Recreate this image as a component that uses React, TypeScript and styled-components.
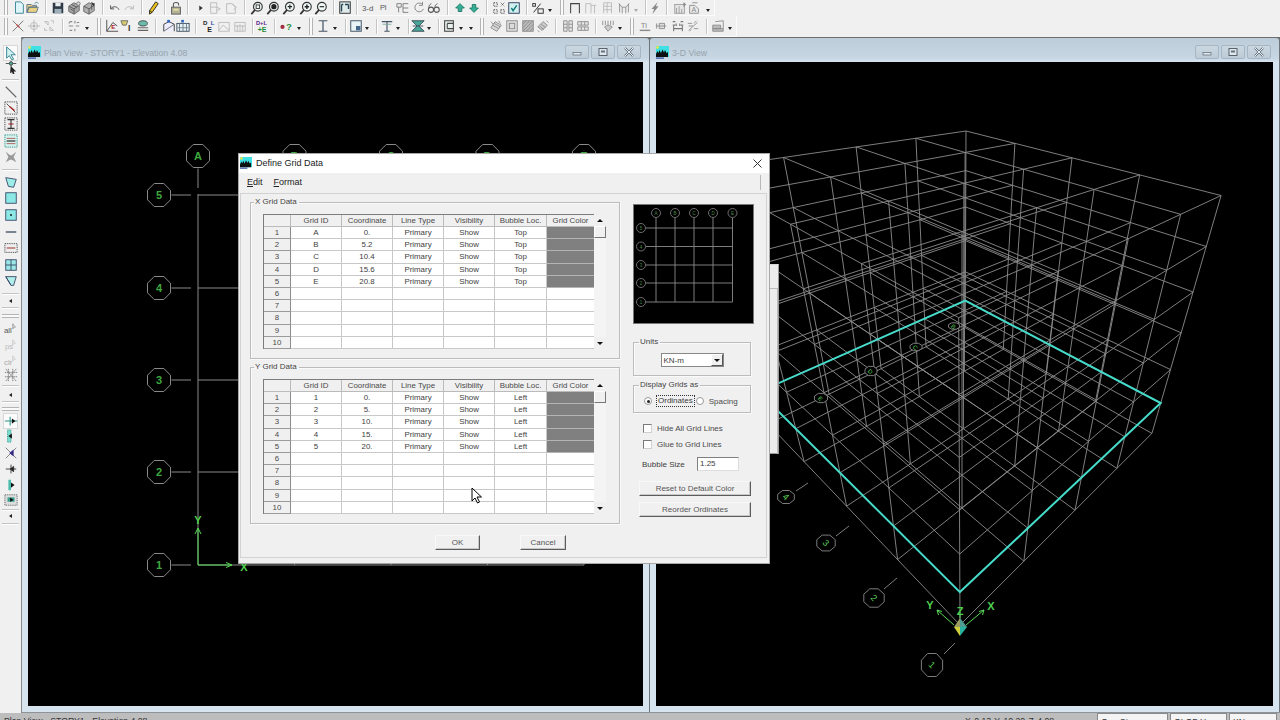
import React from "react";
import styled, { createGlobalStyle } from "styled-components";

const Global = createGlobalStyle`
  html, body { margin: 0; padding: 0; width: 1280px; height: 720px; overflow: hidden; background: #f0f0f0; }
  body { font-family: "Liberation Sans", Arial, sans-serif; color: #3a3a3a; }
  * { box-sizing: border-box; }
`;

const Screen = styled.div`
  position: relative; width: 1280px; height: 720px; display: flex; flex-direction: column;
  overflow: hidden; background: #f0f0f0;
`;
const TopBars = styled.div`
  height: 37px; flex: none; display: flex; flex-direction: column; background: #f0f0f0;
`;
const Row = styled.div<{ $h: number; $w: number }>`
  display: flex; align-items: center; height: ${p => p.$h}px; width: ${p => p.$w}px; flex: none;
  overflow: hidden; border-right: 1px solid #fbfbfb; border-bottom: 1px solid #fbfbfb;
`;
const Cell = styled.div<{ $w: number }>`
  width: ${p => p.$w}px; flex: none; height: 100%; display: flex; align-items: center; justify-content: center;
`;
const VSep = styled.div`width: 1px; height: 15px; background: #c4c4c4; box-shadow: 1px 0 0 #fff;`;
const VGrip = styled.div`width: 4px; height: 17px; border-left: 1px solid #b4b4b4; border-right: 1px solid #b4b4b4; background: #fafafa;`;
const Drop = styled.div<{ $faint?: boolean }>`
  width: 0; height: 0; border-left: 2.5px solid transparent; border-right: 2.5px solid transparent;
  border-top: 3px solid ${p => (p.$faint ? "#aaa" : "#222")}; margin-top: 5px;
`;
const Ico = styled.svg<{ $s?: number }>`width: ${p => p.$s || 14}px; height: ${p => p.$s || 14}px; display: block; flex: none;`;

const Middle = styled.div`flex: 1; display: flex; min-height: 0;`;
const LeftBar = styled.div`
  width: 22px; flex: none; display: flex; flex-direction: column; background: #f0f0f0; border-right: 1px solid #8a8a8a;
`;
const LeftCell = styled.div<{ $h: number }>`
  height: ${p => p.$h}px; flex: none; display: flex; align-items: center; justify-content: center;
`;
const Pressed = styled.div`
  width: 15px; height: 16px; display: flex; align-items: center; justify-content: center;
  background: #fbfbfb; border: 1px solid #d8d8d8;
`;
const HSep = styled.div`height: 1px; width: 17px; background: #c4c4c4; box-shadow: 0 1px 0 #fff;`;
const HGrip = styled.div`height: 4px; width: 17px; border-top: 1px solid #b4b4b4; border-bottom: 1px solid #b4b4b4; background: #fafafa;`;
const SmallArrow = styled.div`
  width: 0; height: 0; border-top: 2.5px solid transparent; border-bottom: 2.5px solid transparent;
  border-right: 3px solid #222;
`;

const Mdi = styled.div`flex: 1; display: flex; min-width: 0; background: #6d7479; border-top: 1px solid #6e6e6e; padding-right: 1px; gap: 1px; border-bottom: 1px solid #8c9499;`;
const MdiWindow = styled.section<{ $w: number }>`
  width: ${p => p.$w}px; flex: none; display: flex; flex-direction: column; padding: 0 6px 6px 6px;
  border-radius: 3px 3px 0 0; background: linear-gradient(#bccdd9 0, #c6d6e2 20px, #d6e4ef 24px, #d6e4ef 100%);
`;
const WinTitle = styled.header`
  height: 24px; flex: none; display: flex; align-items: center; gap: 3px; padding-top: 5px;
`;
const WinName = styled.span`font-size: 8.7px; color: #97a3ad; flex: 1; white-space: nowrap; letter-spacing: 0;`;
const WinBtns = styled.div`display: flex; gap: 1.5px; margin-right: 2px; margin-top: -1px;`;
const WinBtn = styled.button`
  width: 24.5px; height: 14px; padding: 0; display: flex; align-items: center; justify-content: center;
  background: linear-gradient(#cbd8e2, #bccbd7); border: 1px solid #a6b6c2; border-radius: 2px;
`;
const Canvas = styled.div`flex: 1; min-height: 0; background: #000; overflow: hidden;`;
const CanvasSvg = styled.svg`display: block; width: 100%; height: 100%;`;

const StatusBar = styled.footer`
  height: 7px; flex: none; position: relative; display: flex; align-items: flex-start; background: #bdbdbd;
  overflow: hidden; font-size: 8.7px; color: #333; padding: 3px 3px 0 4px; white-space: nowrap;
`;
const StatusMain = styled.span`width: 961px; flex: none;`;
const StatusCoord = styled.span`width: 132px; flex: none; word-spacing: 1px;`;
const StatusBox = styled.span<{ $w: number }>`
  width: ${p => p.$w}px; flex: none; margin-top: -3px; margin-right: 2px; padding: 3px 0 0 3px; height: 12px;
  background: #f4f4f4; border: 1px solid #8a8a8a;
`;

const Dialog = styled.div`
  position: absolute; left: 238px; top: 153px; width: 532px; height: 411px; background: #f0f0f0;
  border: 1px solid #a8a8a8; display: flex; flex-direction: column; font-size: 8px; color: #3c3c3c;
`;
const DlgTitle = styled.header`
  height: 18px; flex: none; background: #fff; display: flex; align-items: center; padding: 0 7px 0 1px; gap: 4px;
  font-size: 9px; color: #222;
`;
const DlgName = styled.span`flex: 1;`;
const MenuBar = styled.nav`
  height: 21px; flex: none; display: flex; align-items: center; gap: 11px; padding: 0 8px 1px 8px; font-size: 9px; color: #222;
  background: linear-gradient(#fff 0, #fff 1px, #f0f0f0 1px);
`;
const MenuEnd = styled.div`margin-left: auto; width: 1px; height: 15px; background: #b8b8b8;`;
const Panel = styled.div`
  flex: 1; min-height: 0; margin: 0 2px 5px 1px; border: 1px solid #d2d2d2; padding: 3px 0 0 9px; display: flex; flex-direction: column;
`;
const PanelTop = styled.div`display: flex; gap: 13px;`;
const LeftCol = styled.div`width: 370px; flex: none; display: flex; flex-direction: column; gap: 3px;`;
const RightCol = styled.div`width: 121px; flex: none; display: flex; flex-direction: column; padding-top: 7px;`;
const Group = styled.fieldset<{ $w?: number; $h?: number; $pad?: string; $top?: number }>`
  margin: ${p => p.$top || 0}px 0 0 0; min-width: 0; border: 1px solid #bcbcbc; box-shadow: inset 1px 1px 0 #fafafa, 1px 1px 0 #fafafa;
  width: ${p => (p.$w ? p.$w + "px" : "100%")}; height: ${p => p.$h}px; padding: ${p => p.$pad || "7px 0 0 12px"};
`;
const Legend = styled.legend<{ $ml: number }>`
  padding: 0 2px 0 1px; margin-left: ${p => p.$ml}px; font-size: 8px; line-height: 10px; height: 10px; color: #444;
`;
const TableBox = styled.div`display: flex; width: 343px; height: 135px;`;
const GridT = styled.div`
  width: 331px; display: grid; grid-template-columns: 27px 51px 51px 51px 51px 52px 48px;
  grid-template-rows: 12px repeat(10, 12.2px); border-top: 1px solid #7c7c7c; border-left: 1px solid #7c7c7c;
`;
const Th = styled.div`
  background: #f0f0f0; border-right: 1px solid #bbb; border-bottom: 1px solid #bbb; display: flex; align-items: center; justify-content: center;
  font-size: 7.9px; color: #4a4a4a; white-space: nowrap; overflow: hidden;
`;
const RowH = styled(Th)`border-right: 1px solid #8c8c8c; border-bottom: 1px solid #9a9a9a;`;
const Td = styled.div`
  background: #fff; border-right: 1px solid #c8c8c8; border-bottom: 1px solid #c8c8c8; display: flex; align-items: center; justify-content: center;
  font-size: 7.9px; color: #3e3e3e; white-space: nowrap; overflow: hidden;
`;
const Swatch = styled(Td)`background: #808080; border-color: #b4b4b4;`;
const Scroll = styled.div`width: 12px; height: 135px; flex: none; display: flex; flex-direction: column; background: #f4f4f4;`;
const ScrollBtn = styled.div`
  height: 12px; flex: none; display: flex; align-items: center; justify-content: center; background: #f0f0f0;
`;
const ScrollThumb = styled.div`height: 12px; flex: none; background: #f0f0f0; border: 1px solid; border-color: #fff #777 #777 #fff;`;
const ScrollTrack = styled.div`flex: 1;`;
const Tri = styled.div<{ $up?: boolean }>`
  width: 0; height: 0; border-left: 3px solid transparent; border-right: 3px solid transparent;
  ${p => (p.$up ? "border-bottom: 3px solid #111;" : "border-top: 3px solid #111;")}
`;
const Preview = styled.div`width: 121px; height: 120px; flex: none; background: #000; border: 1px solid #777; margin-bottom: 13px;`;
const PreviewSvg = styled.svg`display: block; width: 100%; height: 100%;`;
const ComboWrap = styled.div`display: flex; justify-content: center;`;
const Combo = styled.div`
  width: 63px; height: 14px; background: #fff; border: 1px solid #888; display: flex; align-items: center; justify-content: space-between;
  padding-left: 2px; font-size: 8px;
`;
const ComboBtn = styled.div`
  width: 12px; height: 12px; background: #f0f0f0; border: 1px solid; border-color: #fff #555 #555 #fff; display: flex; align-items: center; justify-content: center;
`;
const RadioRow = styled.div`display: flex; align-items: center; padding-left: 10px; height: 12px; margin-top: 1px;`;
const Radio = styled.span<{ $on?: boolean }>`
  width: 8px; height: 8px; border-radius: 50%; background: #fff; border: 1px solid #9a9a9a; flex: none; display: flex; align-items: center; justify-content: center;
  &::after { content: ""; width: 3px; height: 3px; border-radius: 50%; background: ${p => (p.$on ? "#222" : "transparent")}; }
`;
const Focus = styled.span`border: 1px dotted #333; padding: 0 1px; margin: 0 1px 0 4px; line-height: 10px;`;
const RadioText = styled.span`margin-left: 5px; color: #4a4a4a;`;
const CheckRow = styled.label<{ $top: number }>`
  display: flex; align-items: center; gap: 5px; padding-left: 10px; height: 12px; margin-top: ${p => p.$top}px; color: #4a4a4a;
`;
const Check = styled.span`width: 9px; height: 9px; background: #fff; border: 1px solid; border-color: #7a7a7a #d0d0d0 #d0d0d0 #7a7a7a; flex: none;`;
const SizeRow = styled.div`display: flex; align-items: center; padding-left: 9px; height: 14px; margin-top: 7px; color: #3c3c3c;`;
const SizeLabel = styled.span`width: 55px; flex: none;`;
const SizeInput = styled.div`width: 42px; height: 14px; background: #fff; border: 1px solid; border-color: #808080 #ddd #ddd #808080; padding: 1px 0 0 2px; line-height: 10px;`;
const DlgBtn = styled.button<{ $w: number; $top?: number; $left?: number }>`
  width: ${p => p.$w}px; height: 15px; padding: 0; margin-top: ${p => p.$top || 0}px; margin-left: ${p => p.$left || 0}px;
  background: #f0f0f0; border: 1px solid; border-color: #f8f8f8 #5c5c5c #5c5c5c #f8f8f8; box-shadow: inset -1px -1px 0 #c8c8c8;
  font-family: inherit; font-size: 8px; color: #555; flex: none;
`;
const Footer = styled.div`display: flex; gap: 40px; padding-left: 185px; margin-top: 11px;`;
const StrayPanel = styled.div`
  position: absolute; left: 770px; top: 264px; width: 9px; height: 190px; background: #ececec; border-top: 1px solid #d8d8d8;
  border-bottom: 1px solid #999; border-right: 1px solid #999; padding-top: 23px;
  &::after { content: ""; display: block; height: 100%; border-top: 1px solid #bbb; border-right: 1px solid #bbb; }
`;
const Cursor = styled.svg`position: absolute; left: 471px; top: 487px; width: 12px; height: 17px;`;

/* ---------- icons ---------- */
const tx = (t: string, x: number, y: number, fill: string, size = 7, weight = 400) => (
  <text x={x} y={y} fill={fill} fontSize={size} fontWeight={weight} fontFamily="Liberation Sans">{t}</text>
);
const zoomI = (inner: React.ReactNode) => (
  <>
    <circle cx="9" cy="6.5" r="5" fill="#eef6f6" stroke="#333" strokeWidth="1.3" />
    <path d="M5.5 10.5L1.5 15" stroke="#333" strokeWidth="2" />
    {inner}
  </>
);
const D = "#3a3a3a", F = "#b9b9b9", M = "#8a8a8a";
const icons: Record<string, React.ReactNode> = {
  new: <path d="M4 1h6l3 3v10H4z" fill="#dff4f8" stroke="#2f7f90" />,
  open: <><path d="M1 13V4h5l1 1h5v2H4l-3 6 2-6h11l-2 6z" fill="#e8d080" stroke="#55708a" /><path d="M10 3c1-2 3-2 4 0" stroke="#2f7f90" fill="none" /></>,
  save: <><rect x="2" y="2" width="12" height="12" fill="#2e3b47" /><rect x="5" y="2" width="6" height="4" fill="#e8eef0" /><rect x="4" y="9" width="8" height="5" fill="#9fb0ba" /></>,
  m1: <><path d="M2 6l6-4 6 3v6l-6 4-6-3z" fill="#a4a4a4" stroke="#666" /><path d="M2 6l6 3 6-4M8 9v6M5 4l6 3M4 9l3 2" stroke="#555" fill="none" /><circle cx="13" cy="3" r="2" fill="#d8d8d8" stroke="#777" /></>,
  m2: <><path d="M2 6l6-4 6 3v6l-6 4-6-3z" fill="#b0b0b0" stroke="#666" /><path d="M2 6l6 3 6-4M8 9v6M11 4v6" stroke="#555" fill="none" /><path d="M10 1l5 2-2 3" fill="#333" /></>,
  undo: <path d="M3 5v4h4M3.5 8.5C6 5.5 11 6 12.5 10" stroke="#444" strokeWidth="1" fill="none" />,
  redo: <path d="M13 5v4H9M12.5 8.5C10 5.5 5 6 3.5 10" stroke="#b4b4b4" strokeWidth="1" fill="none" />,
  pencil: <><path d="M11 1l3 2-7 10-3 2 0-4z" fill="#e8c020" stroke="#222" /><path d="M4 11l3 2" stroke="#222" /></>,
  lock: <><path d="M5 7V4c0-3 6-3 6 0v1" stroke="#555" strokeWidth="1.2" fill="none" /><rect x="3" y="7" width="10" height="8" fill="#b4b09a" stroke="#555" /><rect x="5" y="9" width="6" height="2" fill="#e8e0a0" /></>,
  play: <path d="M6 5l4 3-4 3z" fill="#333" />,
  frameF: <path d="M3 2h7v12H3zM3 7h7M10 7l4 2-4 2" stroke={F} fill="none" />,
  rotF: <path d="M3 3v11h10V7l-4-4zM9 3l5 4-3 3" stroke={F} fill="none" />,
  z1: zoomI(<rect x="7" y="4.5" width="4" height="4" fill="none" stroke="#333" />),
  z2: zoomI(<circle cx="9" cy="6.5" r="3" fill="#222" />),
  z3: zoomI(<path d="M6.5 6.5h5M9 4v5" stroke="#222" strokeWidth="1.3" />),
  z4: zoomI(<path d="M6.5 6.5h5M9 4v5" stroke="#222" strokeWidth="1.6" />),
  z5: zoomI(<path d="M6.5 6.5h5" stroke="#222" strokeWidth="1.3" />),
  fit: <><rect x="2" y="1" width="12" height="13" fill="#dfeaea" stroke="#222" /><path d="M4 4v8M8 4h4M12 4v5M4 4h2" stroke="#245" strokeWidth="1.6" fill="none" /></>,
  t3d: tx("3-d", 0, 11, "#555", 9),
  tPl: tx("Pl", 1, 10, "#555", 8.5),
  tNl: <path d="M1 3h5v4H1zM3 7v6M8 3v10M8 3h6M8 8h6M8 13h6" stroke="#777" fill="none" />,
  rot: <path d="M12 4a5 5 0 1 0 1 5M12 1v4H8" stroke="#888" strokeWidth="1.1" fill="none" />,
  glass: <><circle cx="4.5" cy="10" r="3" fill="none" stroke="#555" strokeWidth="1.2" /><circle cx="11" cy="10" r="3" fill="none" stroke="#555" strokeWidth="1.2" /><path d="M2 9c0-4 1-5 3-6M9 8c0-3 1-4 3-5" stroke="#555" fill="none" /></>,
  up: <path d="M8 3l5 5h-3v4H6V8H3z" fill="#35b098" stroke="#1d7864" />,
  down: <path d="M8 13l5-5h-3V4H6v4H3z" fill="#35b098" stroke="#1d7864" />,
  sel: <><path d="M2 2h4v4H2zM10 2l4 4M14 2l-4 4M2 10h4v4H2zM10 10h4v4h-4z" stroke="#444" strokeDasharray="1.5 1" fill="none" /></>,
  chk: <><rect x="2" y="2" width="12" height="12" fill="#d4f0ee" stroke="#235" /><path d="M5 8l2 3 4-6" stroke="#0a7a7a" strokeWidth="1.6" fill="none" /></>,
  pct: <><path d="M3 13L11 3" stroke="#222" /><rect x="2" y="3" width="3" height="3" fill="none" stroke="#222" /><rect x="8" y="9" width="6" height="5" fill="none" stroke="#222" /></>,
  port: <path d="M3 14V3h10v11" stroke="#444" strokeWidth="1.2" fill="none" />,
  beam: <path d="M2 14V3h6v11M8 5h6M12 5v9" stroke={F} fill="none" />,
  beam2: <path d="M3 14V2h9v12M3 6h9M3 10h9M7 2v12" stroke={F} fill="none" />,
  beam3: <path d="M2 3l4 4 4 0 4-4M3 3v10M13 3v10M6 7v7M10 7v7" stroke={M} fill="none" />,
  bolt: <path d="M11 1L4 9h3l-2 6 7-9H9z" fill="#8a8a8a" />,
  bars: <><rect x="2" y="4" width="11" height="10" fill="#e6e6e6" stroke="#9a9a9a" /><path d="M4 8v6M7 6v8M10 9v5" stroke="#999" /><path d="M12 1l3 3-3 3z" fill="#888" /></>,
  txtg: <><path d="M3 14V5h6l4 4v5zM6 2h6" stroke="#888" fill="#ececec" />{tx("A", 5, 13, "#888", 8)}</>,
  xcross: <><path d="M2 2l12 12M14 2L2 14" stroke="#6a6a6a" /><path d="M6 6l4 4" stroke="#c05050" strokeWidth="1.4" /></>,
  target: <><circle cx="8" cy="8" r="4" fill="none" stroke={F} /><path d="M8 1v14M1 8h14" stroke={F} /><circle cx="8" cy="8" r="1.5" fill={F} /></>,
  arrowsF: <path d="M3 3h4v4M3 3l4 4M13 13H9V9M13 13L9 9M10 2h3v3M3 10v3h3" stroke={F} fill="none" />,
  dotsF: <path d="M2 8h5M10 8h4M9 2v3M9 11v3M3 3h3M3 13h3M2 5l2-2M11 4h3" stroke={M} strokeWidth="1.2" fill="none" />,
  axE: <><path d="M2 1v13h13M2 14l7-10 5 4" stroke="#444" fill="none" />{tx("E", 7, 11, "#b02020", 7, 700)}</>,
  yT: <><path d="M1 2h8L7 7H3z" fill="#d8cc70" stroke="#666" />{tx("I", 9, 14, "#333", 10, 700)}</>,
  stack: <><ellipse cx="8" cy="5" rx="5" ry="3" fill="#6cbcac" stroke="#444" /><path d="M2 10h12M2 13h12" stroke="#666" strokeWidth="1.4" /></>,
  fr1: <><path d="M2 14V6l6-3 6 3v8" stroke="#333" fill="#eef" /><path d="M2 14L14 6" stroke="#666" /><path d="M6 1h3v3H6z" fill="#2a62c0" /></>,
  fr2: <><rect x="1" y="5" width="14" height="9" fill="#e8f2f4" stroke="#345" /><path d="M4 5v9M8 5v9M12 5v9M2 10h12" stroke="#678" /><path d="M6 1h3v3H6z" fill="#2a62c0" /></>,
  dle: <>{tx("D", 1, 7, "#222", 7, 700)}{tx("L", 10, 7, "#2a4c9a", 7, 700)}{tx("E", 6, 15, "#222", 8, 700)}</>,
  frF: <path d="M2 4h12v10H2zM2 13l5-6 7 6" stroke={F} fill="none" />,
  barsF: <path d="M2 4h12v10H2zM5 7v7M8 6v8M11 7v7M2 8h12" stroke={F} fill="none" />,
  dle2: <>{tx("D+L", 0, 7, "#552288", 6.5, 700)}{tx("+E", 2, 15, "#1a8a3a", 8, 700)}</>,
  qm: <><circle cx="4" cy="9" r="2.4" fill="#a03040" />{tx("?", 8, 13, "#2a9040", 11, 700)}</>,
  ibeam: <path d="M3 2h10M3 14h10M8 2v12" stroke="#456" strokeWidth="1.4" />,
  sq: <><rect x="2" y="2" width="12" height="12" fill="#e8f4f6" stroke="#456" strokeWidth="1.1" /><rect x="8" y="8" width="5" height="5" fill="#468" /></>,
  tee: <><path d="M2 3h12M8 3v11M5 14h6" stroke="#456" strokeWidth="1.3" /><path d="M3 6h10" stroke="#7a9" /></>,
  bow: <><path d="M1 2h14L9 8l6 6H1l6-6z" fill="#4aa898" stroke="#345" /><path d="M2 8h12" stroke="#345" /></>,
  cee: <><rect x="3" y="2" width="10" height="12" fill="#e8f0ee" stroke="#444" strokeWidth="1.2" /><path d="M6 5h7M6 5v6M6 11h7" stroke="#444" strokeWidth="1.2" /></>,
  hat1: <path d="M2 10l5-7 7 4-5 7zM4 7l7 4M6 5l7 4M2 3l3 3M11 2l2 3" stroke={M} fill="#d8d8d8" />,
  hat2: <><rect x="2" y="2" width="12" height="12" fill="#dcdcdc" stroke={M} /><rect x="5" y="5" width="6" height="6" fill="none" stroke={M} /></>,
  hat3: <><rect x="2" y="2" width="12" height="12" fill="#bbb" stroke={M} /><path d="M2 6l4-4M2 10l8-8M2 14L14 2M6 14l8-8M10 14l4-4" stroke="#888" /></>,
  hat4: <path d="M2 9l6-6 5 4-6 6zM4 8l5 4M6 6l5 4M12 2l2 2M2 13l2 2" stroke={M} fill="#ccc" />,
  v2: <path d="M3 2h4v12H3zM9 2h4v12H9zM3 6h4M3 10h4M9 6h4M9 10h4" stroke={M} fill="#e6e6e6" />,
  h2: <path d="M2 3h12v4H2zM2 9h12v4H2zM6 3v4M10 3v4M6 9v4M10 9v4" stroke={M} fill="#e6e6e6" />,
  arrowsD: <path d="M2 2v5M5 2v5M8 2v5M11 2v5M14 2v5M4 9l4 5 5-5-5-2z" stroke={M} fill="#ccc" />,
  tt: <><path d="M2 13h12" stroke={M} strokeWidth="1.6" />{tx("Ti", 3, 10, "#888", 9)}</>,
  rod: <path d="M2 8h12M3 5v6M6 5l6 0 0 6-6 0z" stroke={M} fill="#ddd" />,
  hh: <path d="M2 3h3M2 7h3M11 3h3M11 7h3M3 8v6M13 8v6M3 11h10M6 5v3M10 5v3" stroke="#777" strokeWidth="1.2" fill="none" />,
  sl: <path d="M3 13l10-9M2 5h5M9 11h5M12 2l-3 3M6 12l-2 2M3 8h5" stroke={M} fill="none" />,
  bx: <><path d="M2 7h9v4H2zM2 11h12v3H2z" stroke={M} fill="#bbb" /><path d="M5 3l9-1v9" stroke={M} fill="none" /></>,
  arrow: <path d="M3 1l10 9-5 0 3 5-2 1-3-5-3 3z" fill="#cdf2f0" stroke="#2a7a8a" />,
  arrow2: <><path d="M8 1v14M2 4h12" stroke="#444" /><circle cx="8" cy="4" r="2" fill="#4cae9a" stroke="#444" /><path d="M8 7l6 6-3 0 1 3-2 0-1-3-2 2z" fill="#222" /></>,
  line: <path d="M2 2l12 12" stroke="#666" strokeWidth="1.3" />,
  dashR: <><rect x="1" y="1" width="14" height="14" fill="none" stroke="#444" strokeDasharray="1.5 1" /><path d="M3 3l10 10" stroke="#444" /><path d="M6 6l6 5" stroke="#a83030" strokeWidth="1.6" /></>,
  dashI: <><rect x="1" y="1" width="14" height="14" fill="#eee" stroke="#444" strokeDasharray="1.5 1" /><path d="M4 3h8M4 13h8M8 3v10" stroke="#333" strokeWidth="1.3" /><path d="M5 8h6" stroke="#a83030" strokeWidth="1.3" /></>,
  dashT: <><rect x="1" y="1" width="14" height="14" fill="#d4f2ee" stroke="#2a9288" strokeDasharray="1.5 1" /><path d="M3 8h10" stroke="#333" strokeWidth="1.4" /><path d="M3 5h10M3 11h10" stroke="#b05050" /></>,
  grayX: <path d="M2 2l5 4h2l5-4-3 6 3 6-5-3H7l-5 3 3-6z" fill="#9a9a9a" />,
  poly: <path d="M2 3l12 2-3 9-6-1z" fill="#9cecE8" stroke="#346" />,
  rectT: <rect x="2" y="2" width="12" height="12" fill="#8ce8e4" stroke="#346" />,
  rectD: <><rect x="2" y="2" width="12" height="12" fill="#8ce8e4" stroke="#346" /><rect x="7" y="7" width="2" height="2" fill="#222" /></>,
  lineD: <path d="M2 8h12" stroke="#456" strokeWidth="1.6" />,
  dashL: <><rect x="1" y="3" width="14" height="10" fill="#eee" stroke="#444" strokeDasharray="1.5 1" /><path d="M3 8h10" stroke="#b05050" strokeWidth="1.4" /></>,
  gridT: <><rect x="2" y="2" width="12" height="12" fill="#9ce8e4" stroke="#346" /><path d="M8 2v12M2 8h12" stroke="#346" /></>,
  trap: <path d="M2 3h12l-3 10-3 0zM2 3l6 10" fill="#b0eeea" stroke="#346" />,
  all: <>{tx("all", 0, 13, "#555", 9)}<path d="M10 2l3 4h-2l-1 2z" fill="none" stroke="#999" /></>,
  ps: <>{tx("ps", 1, 13, "#bbb", 9)}<path d="M10 2l3 4h-2l-1 2z" fill="none" stroke="#ccc" /></>,
  clr: <>{tx("clr", 0, 13, "#aaa", 9)}<path d="M10 2l3 4h-2l-1 2z" fill="none" stroke="#ccc" /></>,
  hatch: <path d="M2 1l12 14M14 1L2 15M5 1v14M10 1v14M1 5h14M1 10h14" stroke="#777" strokeDasharray="1.5 .6" />,
  t1: <><path d="M1 8h14M7 3v10" stroke="#2a9288" strokeWidth="1.2" /><path d="M9 5l4 3-4 3z" fill="#111" /></>,
  t2: <><rect x="4" y="1" width="4" height="14" fill="#7cdccc" strokeDasharray="1 1" stroke="#2a9288" /><path d="M9 5l-4 3 4 3z" fill="#111" /></>,
  t3: <><path d="M2 2l12 12M14 2L2 14" stroke="#777" /><path d="M11 4l-5 4 5 4z" fill="#332a88" /></>,
  t4: <path d="M2 8h12M8 3v10M11 5l-4 3 4 3z" stroke="#333" fill="#111" />,
  t5: <><rect x="5" y="2" width="3" height="12" fill="#4cbcac" /><path d="M8 5l4 3-4 3z" fill="#111" /></>,
  t6: <><rect x="1" y="2" width="14" height="12" fill="#ddd" stroke="#666" strokeDasharray="1.5 1" /><rect x="4" y="5" width="8" height="5" fill="#3aa090" /><path d="M7 5l4 3-4 2z" fill="#111" /></>,
};

type Item = [string, number];
const row1: Item[] = [["grip", 5], ["new", 18], ["open", 33], ["sep", 46], ["save", 57], ["m1", 73], ["m2", 91], ["sep", 102], ["undo", 113], ["redo", 130], ["sep", 142], ["pencil", 153], ["sep", 164], ["lock", 176], ["sep", 187], ["play", 201], ["frameF", 214], ["rotF", 232], ["sep", 244], ["z1", 256], ["z2", 273], ["z3", 289], ["z4", 306], ["z5", 323], ["sep", 333], ["fit", 345], ["sep", 356], ["t3d", 368], ["tPl", 385], ["tNl", 404], ["rot", 419], ["glass", 435], ["sep", 448], ["up", 458], ["down", 475], ["sep", 486], ["sel", 498], ["chk", 515], ["sep", 526], ["pct", 537], ["drop", 551], ["grip", 562], ["port", 574], ["beam", 591], ["beam2", 608], ["beam3", 625], ["dropF", 637], ["sep", 644], ["bolt", 655], ["sep", 667], ["bars", 678], ["txtg", 695], ["drop", 708]];
const row2: Item[] = [["grip", 5], ["xcross", 17], ["target", 33], ["arrowsF", 51], ["sep", 62], ["dotsF", 73], ["drop", 87], ["grip", 99], ["axE", 111], ["yT", 127], ["stack", 144], ["sep", 156], ["fr1", 167], ["fr2", 184], ["sep", 196], ["dle", 207], ["frF", 224], ["barsF", 241], ["sep", 252], ["dle2", 263], ["sep", 274], ["qm", 286], ["drop", 299], ["grip", 311], ["ibeam", 323], ["drop", 336], ["sep", 345], ["sq", 355], ["drop", 368], ["sep", 375], ["tee", 387], ["drop", 399], ["sep", 408], ["bow", 417], ["drop", 430], ["sep", 437], ["cee", 449], ["drop", 462], ["drop", 470], ["grip", 482], ["hat1", 495], ["hat2", 512], ["hat3", 527], ["hat4", 544], ["sep", 555], ["v2", 567], ["h2", 584], ["sep", 596], ["arrowsD", 607], ["drop", 620], ["grip", 632], ["tt", 644], ["rod", 661], ["hh", 678], ["sl", 694], ["sep", 706], ["bx", 718], ["drop", 731]];
const leftItems: Item[] = [["arrowP", 55], ["arrow2", 70], ["sep", 81], ["line", 92], ["dashR", 110], ["dashI", 126], ["dashT", 143], ["grayX", 160], ["sep", 171], ["poly", 183], ["rectT", 200], ["rectD", 217], ["lineD", 234], ["dashL", 250], ["gridT", 267], ["trap", 285], ["sep", 296], ["small", 303], ["sep", 310], ["grip", 315], ["all", 330], ["ps", 347], ["clr", 363], ["hatch", 378], ["sep", 388], ["small", 397], ["sep", 404], ["grip", 408], ["t1P", 422], ["t2", 438], ["t3", 455], ["t4", 471], ["t5", 487], ["t6", 504], ["sep", 512], ["small", 518], ["sep", 525]];

const Glyph = ({ k }: { k: string }) => <Ico viewBox="0 0 16 16">{icons[k]}</Ico>;

const ToolRow = ({ items, h, end }: { items: Item[]; h: number; end: number }) => (
  <Row $h={h} $w={end}>
    {items.map(([k, c], i) => {
      const left = i === 0 ? 0 : (items[i - 1][1] + c) / 2;
      const right = i === items.length - 1 ? end - 1 : (c + items[i + 1][1]) / 2;
      return (
        <Cell key={i} $w={right - left}>
          {k === "sep" ? <VSep /> : k === "grip" ? <VGrip /> : k === "drop" ? <Drop /> : k === "dropF" ? <Drop $faint /> : <Glyph k={k} />}
        </Cell>
      );
    })}
  </Row>
);

const LeftTools = () => (
  <LeftBar>
    <LeftCell $h={8} />
    {leftItems.map(([k, c], i) => {
      const top = i === 0 ? 47 : (leftItems[i - 1][1] + c) / 2;
      const bottom = i === leftItems.length - 1 ? c + 4 : (c + leftItems[i + 1][1]) / 2;
      return (
        <LeftCell key={i} $h={bottom - top}>
          {k === "sep" ? <HSep /> : k === "grip" ? <HGrip /> : k === "small" ? <SmallArrow /> :
            k === "arrowP" ? <Pressed><Glyph k="arrow" /></Pressed> :
            k === "t1P" ? <Pressed><Glyph k="t1" /></Pressed> : <Glyph k={k} />}
        </LeftCell>
      );
    })}
  </LeftBar>
);

const TitleLogo = ({ s = 13 }: { s?: number }) => (
  <Ico $s={s} viewBox="0 0 13 13">
    <rect x="0" y="0" width="13" height="11" fill="#3fe0e4" />
    <path d="M0 11V8l1.5-3 1 2 1-3 1.5 3 1.5-3.5 1.5 3 1-2.5 1.5 3 1.5-1V11z" fill="#0d1010" />
    <rect x="0" y="11.5" width="8" height="1.2" fill="#2a4ca0" />
    <circle cx="1.5" cy="1.5" r="1.4" fill="#e8e850" />
  </Ico>
);
const Min = () => <Ico $s={10} viewBox="0 0 10 10"><rect x="1" y="5.5" width="8" height="2.5" fill="#dfe6ec" stroke="#6a7680" strokeWidth=".8" /></Ico>;
const Max = () => <Ico $s={10} viewBox="0 0 10 10"><rect x="1" y="1.5" width="8" height="7" fill="#dfe6ec" stroke="#56626c" /><rect x="3" y="3.5" width="4" height="2" fill="#66727c" /></Ico>;
const Cls = () => <Ico $s={10} viewBox="0 0 10 10"><path d="M1 1l8 8M9 1L1 9" stroke="#66727c" strokeWidth="2.2" /><path d="M1 1l8 8M9 1L1 9" stroke="#e8eef2" strokeWidth="1" /></Ico>;

const Win = ({ w, title, children }: { w: number; title: string; children: React.ReactNode }) => (
  <MdiWindow $w={w}>
    <WinTitle>
      <TitleLogo />
      <WinName>{title}</WinName>
      <WinBtns>
        <WinBtn><Min /></WinBtn>
        <WinBtn><Max /></WinBtn>
        <WinBtn><Cls /></WinBtn>
      </WinBtns>
    </WinTitle>
    <Canvas>{children}</Canvas>
  </MdiWindow>
);

/* ---------- drawings ---------- */
const octa = (cx: number, cy: number, rx: number, ry = rx, rot = 0) =>
  Array.from({ length: 8 }, (_, i) => {
    const a = (Math.PI / 4) * i + Math.PI / 8 + rot;
    return `${(cx + rx * Math.cos(a)).toFixed(1)},${(cy + ry * Math.sin(a)).toFixed(1)}`;
  }).join(" ");

const GREEN = "#3fa83f";
const BubbleLbl = styled.text`font: 700 11px "Liberation Sans", sans-serif; fill: ${GREEN}; text-anchor: middle;`;
const AxisLbl = styled.text`font: 700 11px "Liberation Sans", sans-serif; fill: #4ed04e; text-anchor: middle;`;

const xs = [198, 294.5, 391, 487.5, 584];
const ys: [string, number][] = [["5", 195], ["4", 288], ["3", 380], ["2", 472], ["1", 565]];
const PlanDrawing = () => (
  <CanvasSvg viewBox="28 62 615 644" preserveAspectRatio="none">
    {xs.map((x, i) => (
      <g key={x}>
        <polygon points={octa(x, 156, 12.5)} fill="none" stroke="#8a8a8a" />
        <BubbleLbl x={x} y={160}>{"ABCDE"[i]}</BubbleLbl>
        <path d={`M${x} 168.5V188M${x} 194V565`} stroke="#8a8a8a" />
      </g>
    ))}
    {ys.map(([l, y]) => (
      <g key={l}>
        <polygon points={octa(159, y, 12.5)} fill="none" stroke="#8a8a8a" />
        <BubbleLbl x={159} y={y + 4}>{l}</BubbleLbl>
        <path d={`M171.5 ${y}H191M198 ${y}H584`} stroke="#8a8a8a" />
      </g>
    ))}
    <path d="M198 528V565H232M198 528l-3 6M198 528l3 6M232 565l-6-2.5M232 565l-6 2.5" stroke="#56d856" fill="none" />
    <AxisLbl x={198} y={524}>Y</AxisLbl>
    <AxisLbl x={244} y={571}>X</AxisLbl>
  </CanvasSvg>
);

const project = (x: number, y: number, z: number): [number, number] => {
  const g = 0.497, h = 0.445, i = -0.4;
  const w = 1 + g * x + h * y + i * z;
  return [
    (960 + g * x * 1538 + h * y * 337 + i * z * 962) / w,
    (625 + g * x * 48 + h * y * -28 + i * z * 1086) / w,
  ];
};
const seg = (a: [number, number], b: [number, number]) => `M${a[0].toFixed(1)} ${a[1].toFixed(1)}L${b[0].toFixed(1)} ${b[1].toFixed(1)}`;
const steps = [0, 0.25, 0.5, 0.75, 1];
const levels = [0, 1, 2, 3, 4, 5, 6].map(n => n / 6);
const wire = (() => {
  const out: string[] = [];
  levels.forEach(z => steps.forEach(t => {
    out.push(seg(project(t, 0, z), project(t, 1, z)));
    out.push(seg(project(0, t, z), project(1, t, z)));
  }));
  steps.forEach(a => steps.forEach(b => out.push(seg(project(a, b, 0), project(a, b, 1)))));
  return out.join("");
})();
const slab = [project(0, 0, 1 / 6), project(1, 0, 1 / 6), project(1, 1, 1 / 6), project(0, 1, 1 / 6)]
  .map(p => p.map(v => v.toFixed(1)).join(",")).join(" ");

const sideBubbles: [string, number, number, number, number, string][] = [
  ["1", 932, 665, 11.5, 12.5, "M955 643L944 654"],
  ["2", 874, 598, 11, 10, "M897 578L884 589"],
  ["3", 826, 543, 10, 8.5, "M849 526L836 536"],
  ["4", 786, 497, 9, 7, "M808 483L796 491"],
  ["E", 821, 398, 7, 5, ""],
  ["D", 871, 371, 6.5, 5, ""],
  ["C", 916, 347, 6.5, 4, ""],
  ["B", 954, 326, 6, 3.5, ""],
];

const ThreeD = () => (
  <CanvasSvg viewBox="656 62 617 644" preserveAspectRatio="none">
    <path d={wire} stroke="#8c8c8c" strokeWidth=".9" fill="none" />
    <polygon points={slab} fill="none" stroke="#45dccb" strokeWidth="2" />
    {sideBubbles.map(([l, x, y, rx, ry, stub]) => (
      <g key={l}>
        <polygon points={octa(x, y, rx, ry)} fill="#000" stroke="#8a8a8a" strokeWidth=".9" />
        {stub && <path d={stub} stroke="#8a8a8a" strokeWidth=".9" />}
        <text x={x} y={y + 3} fontSize={rx > 8 ? 9 : 6} fill="#58d058" textAnchor="middle" fontFamily="Liberation Sans" transform={`rotate(45 ${x} ${y})`}>{l}</text>
      </g>
    ))}
    <path d="M954 625L937 610M937 610l1.5 5M937 610l5 1.5M966 625L984 610M984 610l-1.5 5M984 610l-5 1.5M960 618V612" stroke="#58d858" fill="none" />
    <polygon points="960,618 954,627 960,627" fill="#9a9c62" />
    <polygon points="960,618 967,627 960,627" fill="#4f9c92" />
    <polygon points="954,627 960,636 960,627" fill="#cfd03a" />
    <polygon points="967,627 960,636 960,627" fill="#27b39f" />
    <AxisLbl x={930} y={609}>Y</AxisLbl>
    <AxisLbl x={960} y={615}>Z</AxisLbl>
    <AxisLbl x={991} y={610}>X</AxisLbl>
  </CanvasSvg>
);

const pvX = [22, 41, 60, 79, 98.5];
const pvY = [23, 41.5, 60, 78, 97];
const PreviewDrawing = () => (
  <PreviewSvg viewBox="0 0 119 118">
    <path d={pvX.map(x => `M${x} 13V${pvY[4]}`).join("") + pvY.map(y => `M12 ${y}H${pvX[4]}`).join("")} stroke="#8a8a8a" strokeWidth=".9" fill="none" />
    {pvX.map((x, i) => <g key={x}><circle cx={x} cy={8} r={4.5} fill="#000" stroke="#6e6e6e" />
      <text x={x} y={10} fontSize="4.5" textAnchor="middle" fill="#4a8a4a" fontFamily="Liberation Sans">{"ABCDE"[i]}</text></g>)}
    {pvY.map((y, i) => <g key={y}><circle cx={7} cy={y} r={4.5} fill="#000" stroke="#6e6e6e" />
      <text x={7} y={y + 2} fontSize="4.5" textAnchor="middle" fill="#4a8a4a" fontFamily="Liberation Sans">{"54321"[i]}</text></g>)}
  </PreviewSvg>
);

const headers = ["", "Grid ID", "Coordinate", "Line Type", "Visibility", "Bubble Loc.", "Grid Color"];
const GridTable = ({ ids, coords, loc }: { ids: string[]; coords: string[]; loc: string }) => (
  <TableBox>
    <GridT>
      {headers.map((h, i) => <Th key={i}>{h}</Th>)}
      {Array.from({ length: 10 }, (_, r) => {
        const has = r < ids.length;
        return (
          <React.Fragment key={r}>
            <RowH>{r + 1}</RowH>
            <Td>{has ? ids[r] : ""}</Td>
            <Td>{has ? coords[r] : ""}</Td>
            <Td>{has ? "Primary" : ""}</Td>
            <Td>{has ? "Show" : ""}</Td>
            <Td>{has ? loc : ""}</Td>
            {has ? <Swatch /> : <Td />}
          </React.Fragment>
        );
      })}
    </GridT>
    <Scroll>
      <ScrollBtn><Tri $up /></ScrollBtn>
      <ScrollThumb />
      <ScrollTrack />
      <ScrollBtn><Tri /></ScrollBtn>
    </Scroll>
  </TableBox>
);

export default function App() {
  return (
    <Screen>
      <Global />
      <TopBars>
        <ToolRow items={row1} h={16} end={715} />
        <ToolRow items={row2} h={21} end={737} />
      </TopBars>
      <Middle>
        <LeftTools />
        <Mdi>
          <Win w={627} title="Plan View - STORY1 - Elevation 4.08"><PlanDrawing /></Win>
          <Win w={629} title="3-D View"><ThreeD /></Win>
        </Mdi>
      </Middle>
      <StatusBar>
        <StatusMain>Plan View - STORY1 - Elevation 4.08</StatusMain>
        <StatusCoord>X 0.13 Y 10.20 Z 4.08</StatusCoord>
        <StatusBox $w={71}>One Story</StatusBox>
        <StatusBox $w={57}>GLOBAL</StatusBox>
        <StatusBox $w={48}>KN-m</StatusBox>
      </StatusBar>

      <StrayPanel />
      <Dialog>
        <DlgTitle>
          <TitleLogo s={12} />
          <DlgName>Define Grid Data</DlgName>
          <Ico $s={9} viewBox="0 0 9 9"><path d="M.5.5l8 8M8.5.5l-8 8" stroke="#333" strokeWidth="1" /></Ico>
        </DlgTitle>
        <MenuBar>
          <span><u>E</u>dit</span>
          <span><u>F</u>ormat</span>
          <MenuEnd />
        </MenuBar>
        <Panel>
          <PanelTop>
            <LeftCol>
              <Group $h={162}>
                <Legend $ml={-9}>X Grid Data</Legend>
                <GridTable ids={["A", "B", "C", "D", "E"]} coords={["0.", "5.2", "10.4", "15.6", "20.8"]} loc="Top" />
              </Group>
              <Group $h={162}>
                <Legend $ml={-9}>Y Grid Data</Legend>
                <GridTable ids={["1", "2", "3", "4", "5"]} coords={["0.", "5.", "10.", "15.", "20."]} loc="Left" />
              </Group>
            </LeftCol>
            <RightCol>
              <Preview><PreviewDrawing /></Preview>
              <Group $w={118} $h={39} $pad="6px 0 0 0">
                <Legend $ml={5}>Units</Legend>
                <ComboWrap>
                  <Combo>KN-m<ComboBtn><Tri /></ComboBtn></Combo>
                </ComboWrap>
              </Group>
              <Group $w={118} $h={33} $pad="4px 0 0 0" $top={4}>
                <Legend $ml={5}>Display Grids as</Legend>
                <RadioRow>
                  <Radio $on />
                  <Focus>Ordinates</Focus>
                  <Radio />
                  <RadioText>Spacing</RadioText>
                </RadioRow>
              </Group>
              <CheckRow $top={9}><Check />Hide All Grid Lines</CheckRow>
              <CheckRow $top={4}><Check />Glue to Grid Lines</CheckRow>
              <SizeRow><SizeLabel>Bubble Size</SizeLabel><SizeInput>1.25</SizeInput></SizeRow>
              <DlgBtn $w={112} $top={10} $left={6}>Reset to Default Color</DlgBtn>
              <DlgBtn $w={112} $top={6} $left={6}>Reorder Ordinates</DlgBtn>
            </RightCol>
          </PanelTop>
          <Footer>
            <DlgBtn $w={45}>OK</DlgBtn>
            <DlgBtn $w={46}>Cancel</DlgBtn>
          </Footer>
        </Panel>
      </Dialog>
      <Cursor viewBox="0 0 12 17">
        <path d="M1 1v13l3-3 2.5 5 2-1-2.5-5h4.5z" fill="#fff" stroke="#000" />
      </Cursor>
    </Screen>
  );
}
